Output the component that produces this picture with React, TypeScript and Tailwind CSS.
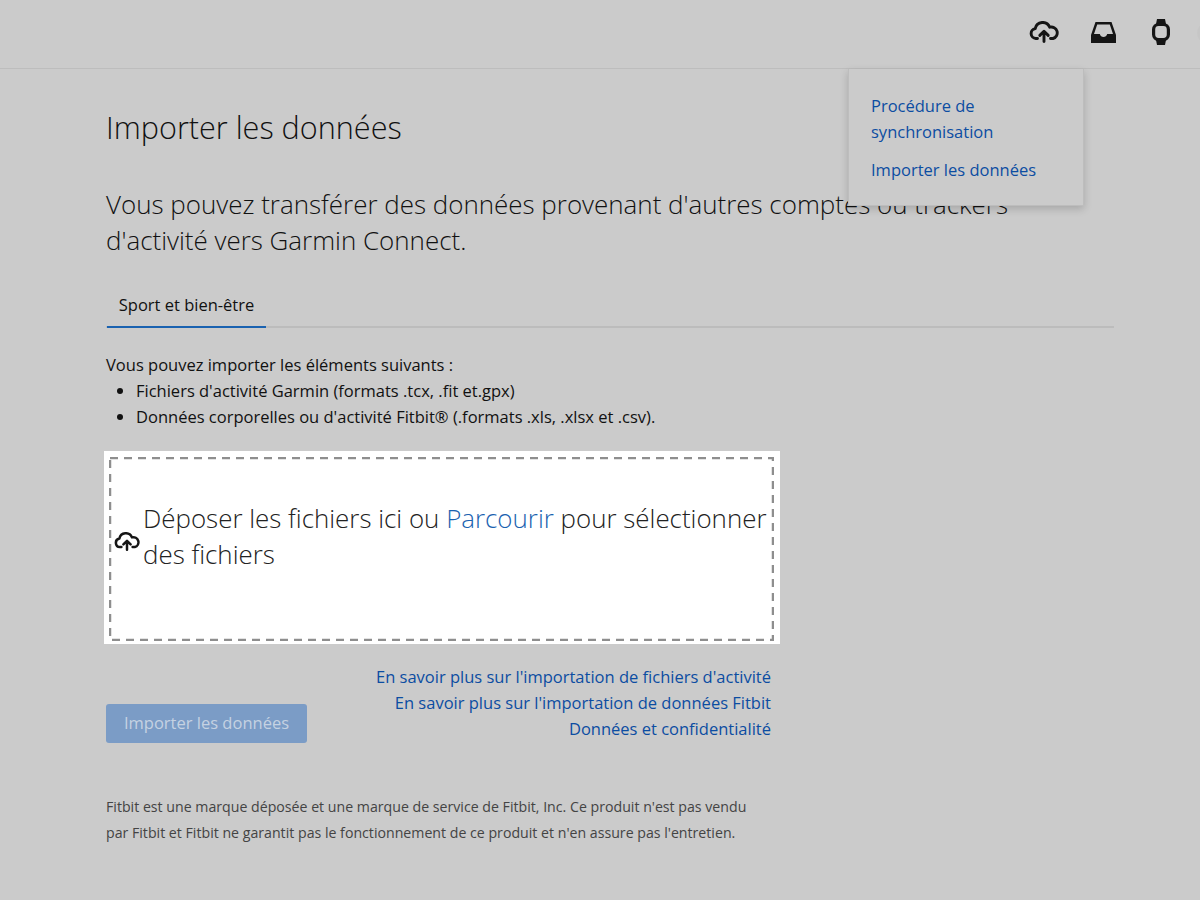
import React from 'react';

const CloudUpload = ({ className }: { className?: string }) => (
  <svg className={className} viewBox="0 0 30 22" fill="none" stroke="currentColor" strokeWidth={2.9} strokeLinecap="round" strokeLinejoin="round">
    <path d="M8.500 17.500H6.800a5 5 0 0 1-.6-9.900A7.600 7.600 0 0 1 20.700 6.200 5.700 5.700 0 0 1 24 17.500h-2.500" />
    <path d="M15 20.500V10.500M10.800 14.400 15 10.200l4.200 4.200" />
  </svg>
);

const InboxTray = () => (
  <svg className="w-[25px] h-[21px]" viewBox="0 0 25 21" fill="currentColor">
    <path fillRule="evenodd" d="M4.500 0h16L25 13v8H0v-8L4.500 0Zm1.700 2.500L3 12h5.800c.5 1.900 1.900 3 3.700 3s3.200-1.100 3.700-3H22l-3.200-9.500H6.200Z" />
  </svg>
);

const Watch = () => (
  <svg className="w-[18px] h-[26px]" viewBox="0 0 18 26" fill="none" stroke="currentColor">
    <path d="M5 0h8l1 5H4l1-5ZM4 21h10l-1 5H5l-1-5Z" fill="currentColor" stroke="none" />
    <rect x="1.600" y="5.500" width="14.800" height="15" rx="5" strokeWidth={3.200} />
  </svg>
);

const linkClass = 'text-[#0c4da2]';

export default function App() {
  return (
    <div className="relative min-h-[900px] overflow-hidden bg-[#cbcbcb] font-['Open_Sans',sans-serif] text-[#111]">
      <header className="relative h-[69px] border-b border-[#bdbdbd] flex items-center justify-end pr-[30px] pb-[4px] text-[#151515]">
        <CloudUpload className="w-[30px] h-[22px] mr-[32px]" />
        <InboxTray />
        <div className="ml-[36px] flex"><Watch /></div>
        <div className="absolute left-[1197px] top-[22px] w-[22px] h-[22px] rounded-full bg-[#c6c6c6]" />
      </header>

      <div className="absolute left-[848px] top-[69px] w-[236px] h-[137px] z-10 bg-[#cbcbcb] border-r border-b border-l border-[#bdbdbd] shadow-[0_3px_8px_rgba(0,0,0,0.18)] pl-[22px] pt-[24px] text-[16.5px] leading-[26px]">
        <a className={`block w-[170px] ${linkClass}`}>Procédure de synchronisation</a>
        <a className={`block mt-[12px] ${linkClass}`}>Importer les données</a>
      </div>

      <main className="pl-[106px] pr-[86px]">
        <h1 className="mt-[36px] text-[30.6px] leading-[44px] font-light">Importer les données</h1>
        <p className="mt-[37px] w-[930px] text-[25.95px] leading-[36px] font-light">
          Vous pouvez transférer des données provenant d'autres comptes ou trackers d'activité vers Garmin Connect.
        </p>

        <div className="mt-[27px] border-b-2 border-[#bcbcbc] flex">
          <div className="ml-px -mb-[2px] w-[159px] h-[43px] border-b-2 border-[#1a62b0] text-[16.5px] leading-[40px] text-center">Sport et bien-être</div>
        </div>

        <div className="mt-[24px] text-[16.5px] leading-[26px]">
          <p>Vous pouvez importer les éléments suivants :</p>
          <ul className="list-disc pl-[30px]">
            <li>Fichiers d'activité Garmin (formats .tcx, .fit et.gpx)</li>
            <li>Données corporelles ou d'activité Fitbit® (.formats .xls, .xlsx et .csv).</li>
          </ul>
        </div>

        <div className="mt-[21px] -ml-[2px] w-[676px] h-[193px] bg-white pt-[6px] pr-[6px] pb-[3px] pl-[5px]">
          <div className="relative h-full flex items-center gap-[3px] pl-[5px] pb-[26px]">
            <svg className="absolute inset-0 w-full h-full" fill="none">
              <rect x="1" y="1" width="calc(100% - 2px)" height="calc(100% - 2px)" stroke="#8e8e8e" strokeWidth={2.5} strokeDasharray="8 6" />
            </svg>
            <CloudUpload className="w-[26px] h-[19px] shrink-0 mt-[10px] text-[#151515]" />
            <p className="text-[25.9px] leading-[36px] font-light text-[#222] whitespace-nowrap">
              Déposer les fichiers ici ou <a className="text-[#1a62b0]">Parcourir</a> pour sélectionner<br />des fichiers
            </p>
          </div>
        </div>

        <div className="mt-[20px] w-[665px] flex justify-between items-start">
          <button className="mt-[40px] w-[201px] h-[39px] rounded-[3px] bg-[#7b9cc6] text-[#c5d2e2] text-[16.5px]">Importer les données</button>
          <div className="text-right text-[16.5px] leading-[26px]">
            <a className={`block ${linkClass}`}>En savoir plus sur l'importation de fichiers d'activité</a>
            <a className={`block ${linkClass}`}>En savoir plus sur l'importation de données Fitbit</a>
            <a className={`block ${linkClass}`}>Données et confidentialité</a>
          </div>
        </div>

        <p className="mt-[51px] w-[650px] text-[14.17px] leading-[26px] text-[#444]">
          Fitbit est une marque déposée et une marque de service de Fitbit, Inc. Ce produit n'est pas vendu par Fitbit et Fitbit ne garantit pas le fonctionnement de ce produit et n'en assure pas l'entretien.
        </p>
      </main>
    </div>
  );
}
